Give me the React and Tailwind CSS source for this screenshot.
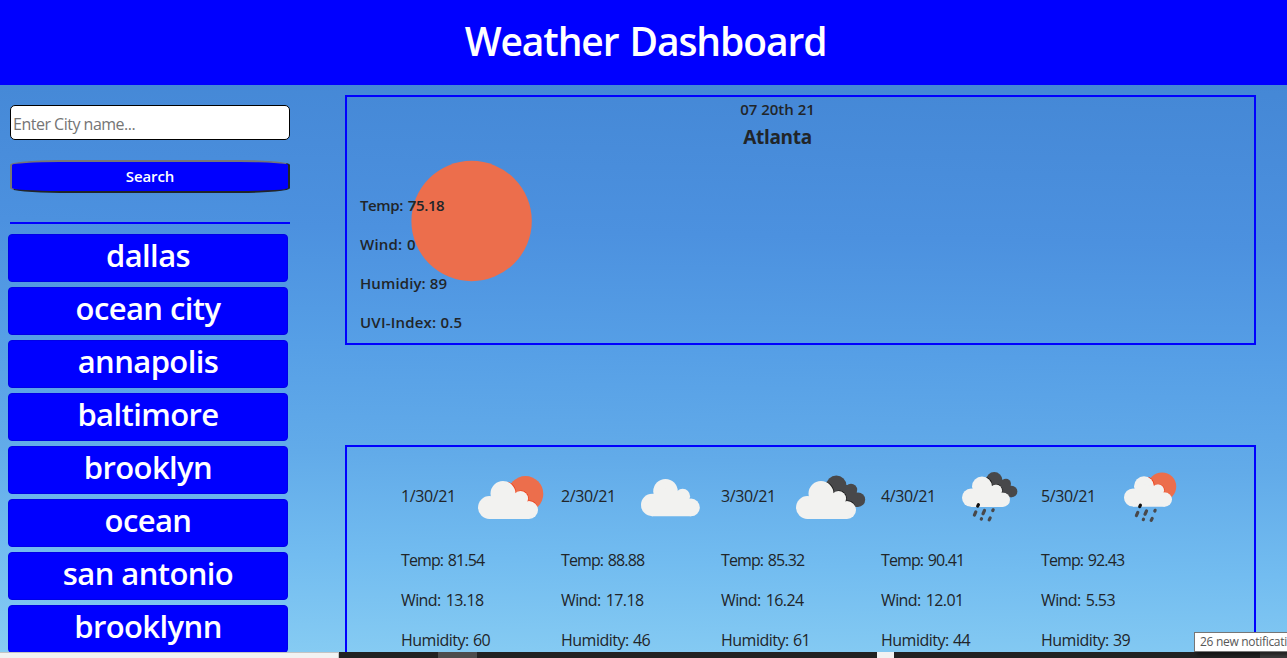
const cities = ['dallas', 'ocean city', 'annapolis', 'baltimore', 'brooklyn', 'ocean', 'san antonio', 'brooklynn'];

const forecast = [
  { date: '1/30/21', icon: 'few', temp: '81.54', wind: '13.18', humidity: '60' },
  { date: '2/30/21', icon: 'cloud', temp: '88.88', wind: '17.18', humidity: '46' },
  { date: '3/30/21', icon: 'broken', temp: '85.32', wind: '16.24', humidity: '61' },
  { date: '4/30/21', icon: 'shower', temp: '90.41', wind: '12.01', humidity: '44' },
  { date: '5/30/21', icon: 'rain', temp: '92.43', wind: '5.53', humidity: '39' },
];

function CloudShape() {
  return (
    <>
      <circle cx="25" cy="12.5" r="12.5" />
      <circle cx="11.4" cy="26.5" r="11.4" />
      <circle cx="42.5" cy="17.5" r="7.6" />
      <circle cx="51" cy="29" r="9" />
      <path d="M11 38H51V24L44 14L25 10L14 18Z" />
    </>
  );
}

function Cloud({ edge }) {
  return (
    <>
      {edge && (
        <g fill={edge} transform="translate(0.6 -0.4)">
          <path d="M25 12.5L30 1.1A12.5 12.5 0 0 1 37.5 12.5Z" />
          <circle cx="42.5" cy="17.5" r="7.6" />
          <path d="M43 22L51 20A9 9 0 0 1 58 24L50 29Z" />
        </g>
      )}
      <g fill="#f2f2f0">
        <CloudShape />
      </g>
    </>
  );
}

function Sun() {
  return <circle cx="47.5" cy="12.9" r="17.8" fill="#ec6e4c" />;
}

function DarkCloud() {
  return (
    <g fill="#48484a">
      <circle cx="40.3" cy="4.7" r="10.2" />
      <circle cx="55" cy="9" r="6.2" />
      <circle cx="62" cy="18.7" r="7.2" />
      <path d="M40 4L55 4L61 12L62 25.9H50L36 14Z" />
    </g>
  );
}

function Drops() {
  return (
    <g stroke="#48484a" strokeWidth="3.2" strokeLinecap="round">
      <path d="M16.4 28.2L15.7 29.6" stroke="#111" />
      <path d="M13.8 35.4L12.4 38.6" />
      <path d="M22.5 34L21 37.2" />
      <path d="M31.1 33.3L30.8 34" />
      <path d="M19.5 42.2L19.3 42.6" />
      <path d="M28.2 41.4L27.2 43.4" />
    </g>
  );
}

function WeatherIcon({ kind }) {
  return (
    <svg width="80" height="65" viewBox="0 0 80 65" className="shrink-0">
      {kind === 'few' && (
        <g transform="translate(7 16)">
          <Sun />
          <Cloud edge="#f03a12" />
        </g>
      )}
      {kind === 'cloud' && (
        <g transform="translate(10 14) scale(0.98)">
          <Cloud />
        </g>
      )}
      {kind === 'broken' && (
        <g transform="translate(5 16)">
          <DarkCloud />
          <Cloud edge="#111" />
        </g>
      )}
      {kind === 'shower' && (
        <g transform="translate(11 11.5)">
          <g transform="scale(0.8)">
            <DarkCloud />
            <Cloud edge="#111" />
          </g>
          <Drops />
        </g>
      )}
      {kind === 'rain' && (
        <g transform="translate(13 11.3)">
          <g transform="scale(0.8)">
            <Sun />
            <Cloud edge="#f03a12" />
          </g>
          <g transform="translate(0 0.7)">
            <Drops />
          </g>
        </g>
      )}
    </svg>
  );
}

export default function App() {
  return (
    <div className="relative flex h-[658px] w-[1287px] flex-col overflow-hidden bg-[linear-gradient(181.2deg,#4183d1_0%,#4588d6_14%,#4c91df_36%,#569fe6_53%,#62abe9_69%,#72bcf0_84%,#88cdf3_100%)] font-['Open_Sans','Noto_Sans',sans-serif] text-[#212529]">
      <header className="flex h-[85px] shrink-0 items-start justify-center bg-[#0000ff] pt-[11px] pl-[4px]">
        <h1 className="text-[39px] leading-[60px] font-semibold tracking-[-1.1px] text-white [word-spacing:2px]">Weather Dashboard</h1>
      </header>

      <main className="flex h-[567px] shrink-0 overflow-hidden">
        <aside className="w-[345px] shrink-0">
          <div className="flex w-[290px] flex-col pt-5 pl-[10px]">
            <input
              type="text"
              placeholder="Enter City name..."
              className="h-[35px] w-full rounded-[5px] border border-black bg-white px-[2px] pt-[2px] text-[16px] tracking-[-0.5px] placeholder:text-[#757575]"
            />
            <button className="mt-5 h-[33px] w-full rounded-[50px/5px] border-2 border-t-[#767676] border-r-[#212529] border-b-[#212529] border-l-[#767676] bg-[#0000ff] pb-[2px] text-[15px] leading-[26px] font-semibold tracking-[-0.1px] text-white">
              Search
            </button>
            <hr className="mt-[29px] border-t-2 border-[#0000ff]" />
          </div>
          <ul className="mt-[10px] flex w-[288px] flex-col gap-[5px] pl-2">
            {cities.map((city) => (
              <li
                key={city}
                className="h-12 rounded-[4px] border border-[#0000e6] bg-[#0000ff] text-center text-[31px] leading-[40px] font-semibold tracking-[-0.6px] text-white"
              >
                {city}
              </li>
            ))}
          </ul>
        </aside>

        <div className="w-[911px] shrink-0 pt-[10px]">
          <section className="relative h-[250px] border-2 border-[#0000ff] pl-[13px]">
            <svg className="absolute top-[63px] left-[64px]" width="122" height="122" viewBox="0 0 122 122">
              <circle cx="60.6" cy="61" r="60.2" fill="#ec6e4c" />
            </svg>
            <div className="relative mr-[46px] -ml-[13px] flex flex-col items-center">
              <p className="text-[15px] leading-6 font-semibold tracking-[0px]">07 20th 21</p>
              <h2 className="mt-[4px] text-[19px] leading-6 font-bold tracking-[-0.3px]">Atlanta</h2>
            </div>
            <div className="relative mt-[44px] flex flex-col gap-[15px] text-[15px] leading-6 font-semibold">
              <p className="tracking-[-0.4px] [word-spacing:1.5px]">Temp: 75.18</p>
              <p className="tracking-[0.2px] [word-spacing:0.5px]">Wind: 0</p>
              <p className="tracking-[0.1px]">Humidiy: 89</p>
              <p className="tracking-[0.2px]">UVI-Index: 0.5</p>
            </div>
          </section>

          <section className="mt-[100px] flex h-[260px] border-2 border-[#0000ff] pt-[18px] pl-[54px]">
            {forecast.map((day) => (
              <article key={day.date} className="w-40 shrink-0 text-[16px] leading-6">
                <div className="flex h-[65px] items-center">
                  <p className="w-[70px] shrink-0 pb-[4px] tracking-[-0.4px]">{day.date}</p>
                  <WeatherIcon kind={day.icon} />
                </div>
                <div className="mt-[18px] flex flex-col gap-4">
                  <p className="tracking-[-0.9px] [word-spacing:1.5px]">Temp: {day.temp}</p>
                  <p className="tracking-[-0.6px] [word-spacing:1.5px]">Wind: {day.wind}</p>
                  <p className="tracking-[-0.5px] [word-spacing:0.5px]">Humidity: {day.humidity}</p>
                </div>
              </article>
            ))}
          </section>
        </div>
      </main>

      <footer className="flex h-[6px] shrink-0 bg-[#222222]">
        <div className="w-[339px] border-t border-r border-[#c4c4c4] bg-[#f2f2f2]" />
        <div className="ml-[99px] w-[39px] bg-[#4d4d4d]" />
        <div className="ml-[400px] w-[17px] bg-[#f2f2f2]" />
        <div className="ml-auto w-[27px] bg-[#3a3a3a]" />
      </footer>

      <div className="absolute top-[632px] left-[1194px] h-5 w-[110px] border border-[#767676] bg-white pl-[5px] text-[12px] leading-[18px] tracking-[-0.3px] whitespace-nowrap text-[#575757] shadow-[3px_3px_3px_rgba(0,0,0,0.4)]">
        26 new notificati
      </div>
    </div>
  );
}
